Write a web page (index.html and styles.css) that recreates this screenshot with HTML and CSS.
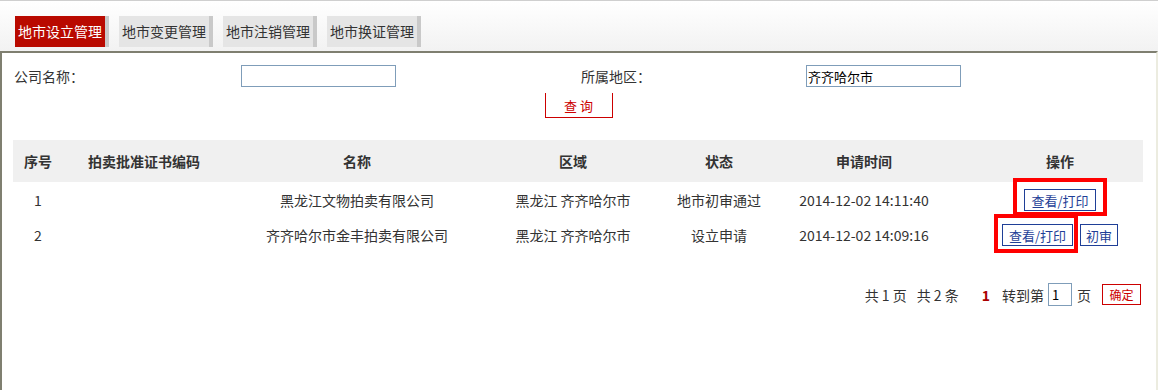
FILE: index.html
```html
<!DOCTYPE html>
<html>
<head>
<meta charset="utf-8">
<link rel="stylesheet" href="styles.css">
</head>
<body>
<div class="nav">
  <a class="tab tab-active">地市设立管理</a>
  <a class="tab">地市变更管理</a>
  <a class="tab">地市注销管理</a>
  <a class="tab">地市换证管理</a>
</div>

<div class="frame">
  <div class="search">
    <label class="search-label">公司名称：</label>
    <div><input class="search-input" type="text" value=""></div>
    <label class="search-label">所属地区：</label>
    <div><input class="search-input" type="text" value="齐齐哈尔市"></div>
  </div>
  <div class="search-btn-row">
    <button class="search-btn">查 询</button>
  </div>

  <table class="list">
    <thead>
      <tr>
        <th class="c-no">序号</th>
        <th class="c-code">拍卖批准证书编码</th>
        <th class="c-name">名称</th>
        <th class="c-area">区域</th>
        <th class="c-state">状态</th>
        <th class="c-time">申请时间</th>
        <th class="c-op">操作</th>
      </tr>
    </thead>
    <tbody>
      <tr>
        <td>1</td>
        <td></td>
        <td>黑龙江文物拍卖有限公司</td>
        <td>黑龙江 齐齐哈尔市</td>
        <td>地市初审通过</td>
        <td>2014-12-02 14:11:40</td>
        <td class="c-op"><button class="op-btn">查看/打印</button></td>
      </tr>
      <tr>
        <td>2</td>
        <td></td>
        <td>齐齐哈尔市金丰拍卖有限公司</td>
        <td>黑龙江 齐齐哈尔市</td>
        <td>设立申请</td>
        <td>2014-12-02 14:09:16</td>
        <td class="c-op"><button class="op-btn">查看/打印</button><button class="op-btn op-small">初审</button></td>
      </tr>
    </tbody>
  </table>

  <div class="pager">
    <span>共 1 页</span>
    <span class="pager-gap">共 2 条</span>
    <span class="pager-cur">1</span>
    <span>转到第</span>
    <input class="pager-input" type="text" value="1">
    <span>页</span>
    <button class="pager-btn">确定</button>
  </div>

  <!-- review marks drawn over the screenshot -->
  <span class="mark mark-1"></span>
  <span class="mark mark-2"></span>
</div>
</body>
</html>
```

FILE: styles.css
```css
body {
  margin: 0;
  height: 390px;
  background: #fff;
  font-family: "Noto Sans CJK SC", "Noto Sans", sans-serif;
  font-size: 14px;
  color: #333;
  overflow: hidden;
}
.nav {
  height: 51px;
  box-sizing: border-box;
  border-top: 1px solid #cfcfcf;
  padding: 15px 0 0 15px;
  display: flex;
  gap: 10px;
  background: linear-gradient(#fff, #f2f2f2);
}
.tab {
  width: 90px;
  height: 31px;
  line-height: 31px;
  text-align: center;
  font-size: 14px;
  color: #333;
  background: #e5e5e5;
  border-right: 4px solid #c9c9c9;
}
.tab-active {
  background: #b90a00;
  color: #fff;
}
.frame {
  position: relative;
  height: 339px;
  box-sizing: border-box;
  border: 2px solid;
  border-bottom: 0;
  border-color: #7f7f70 #ecece0 #ecece0 #7f7f70;
  padding: 12px 12px 0 11px;
}
.search {
  display: grid;
  grid-template-columns: 228px 339px 226px 1fr;
  align-items: center;
}
.search-label {
  padding-left: 1px;
  color: #333;
}
.search-input {
  display: block;
  width: 155px;
  height: 22px;
  box-sizing: border-box;
  border: 1px solid #7f9db9;
  padding: 0 1px;
  font-family: inherit;
  font-size: 13px;
  color: #000;
}
.search-btn-row {
  text-align: center;
  margin-top: 6px;
  height: 25px;
}
.search-btn {
  width: 68px;
  height: 25px;
  background: #fff;
  border: 1px solid #c00;
  border-top: none;
  color: #c00;
  font-family: inherit;
  font-size: 13px;
  padding: 0;
  vertical-align: top;
}
.list {
  width: 1130px;
  margin-top: 22px;
  border-collapse: collapse;
  table-layout: fixed;
  font-size: 14px;
}
.list th {
  height: 42px;
  padding: 0;
  background: #f0f0f0;
  font-weight: bold;
  color: #333;
}
.list td {
  height: 35px;
  text-align: center;
  color: #333;
  padding: 0;
}
.c-no { width: 50px; }
.c-code { width: 162px; }
.c-name { width: 264px; }
.c-area { width: 168px; }
.c-state { width: 124px; }
.c-time { width: 166px; }
.list .c-op { padding-left: 30px; }
.op-btn {
  height: 22px;
  padding: 0 6px;
  background: #fff;
  border: 1px solid #1f3f97;
  color: #1f3f97;
  font-family: inherit;
  font-size: 13px;
  vertical-align: middle;
}
.op-small {
  margin-left: 7px;
  padding: 0 5px;
}
.pager {
  display: flex;
  justify-content: flex-end;
  align-items: center;
  margin-top: 31px;
  padding-right: 3px;
}
.pager-gap {
  margin-left: 10px;
}
.pager-cur {
  color: #a00;
  font-weight: bold;
  margin: 0 12px 0 23px;
}
.pager-input {
  width: 24px;
  height: 23px;
  box-sizing: border-box;
  border: 1px solid #7f9db9;
  font-family: inherit;
  font-size: 13px;
  padding: 0 3px;
  margin: 0 5px 0 4px;
}
.pager-btn {
  height: 21px;
  width: 39px;
  margin-left: 11px;
  padding: 0;
  background: #fff;
  border: 1px solid #c00;
  color: #c00;
  font-family: inherit;
  font-size: 12px;
}
.mark {
  position: absolute;
  border: 4px solid #f00;
}
.mark-1 {
  left: 1011px;
  top: 125px;
  width: 86px;
  height: 30px;
}
.mark-2 {
  left: 992px;
  top: 161px;
  width: 76px;
  height: 31px;
}
```
